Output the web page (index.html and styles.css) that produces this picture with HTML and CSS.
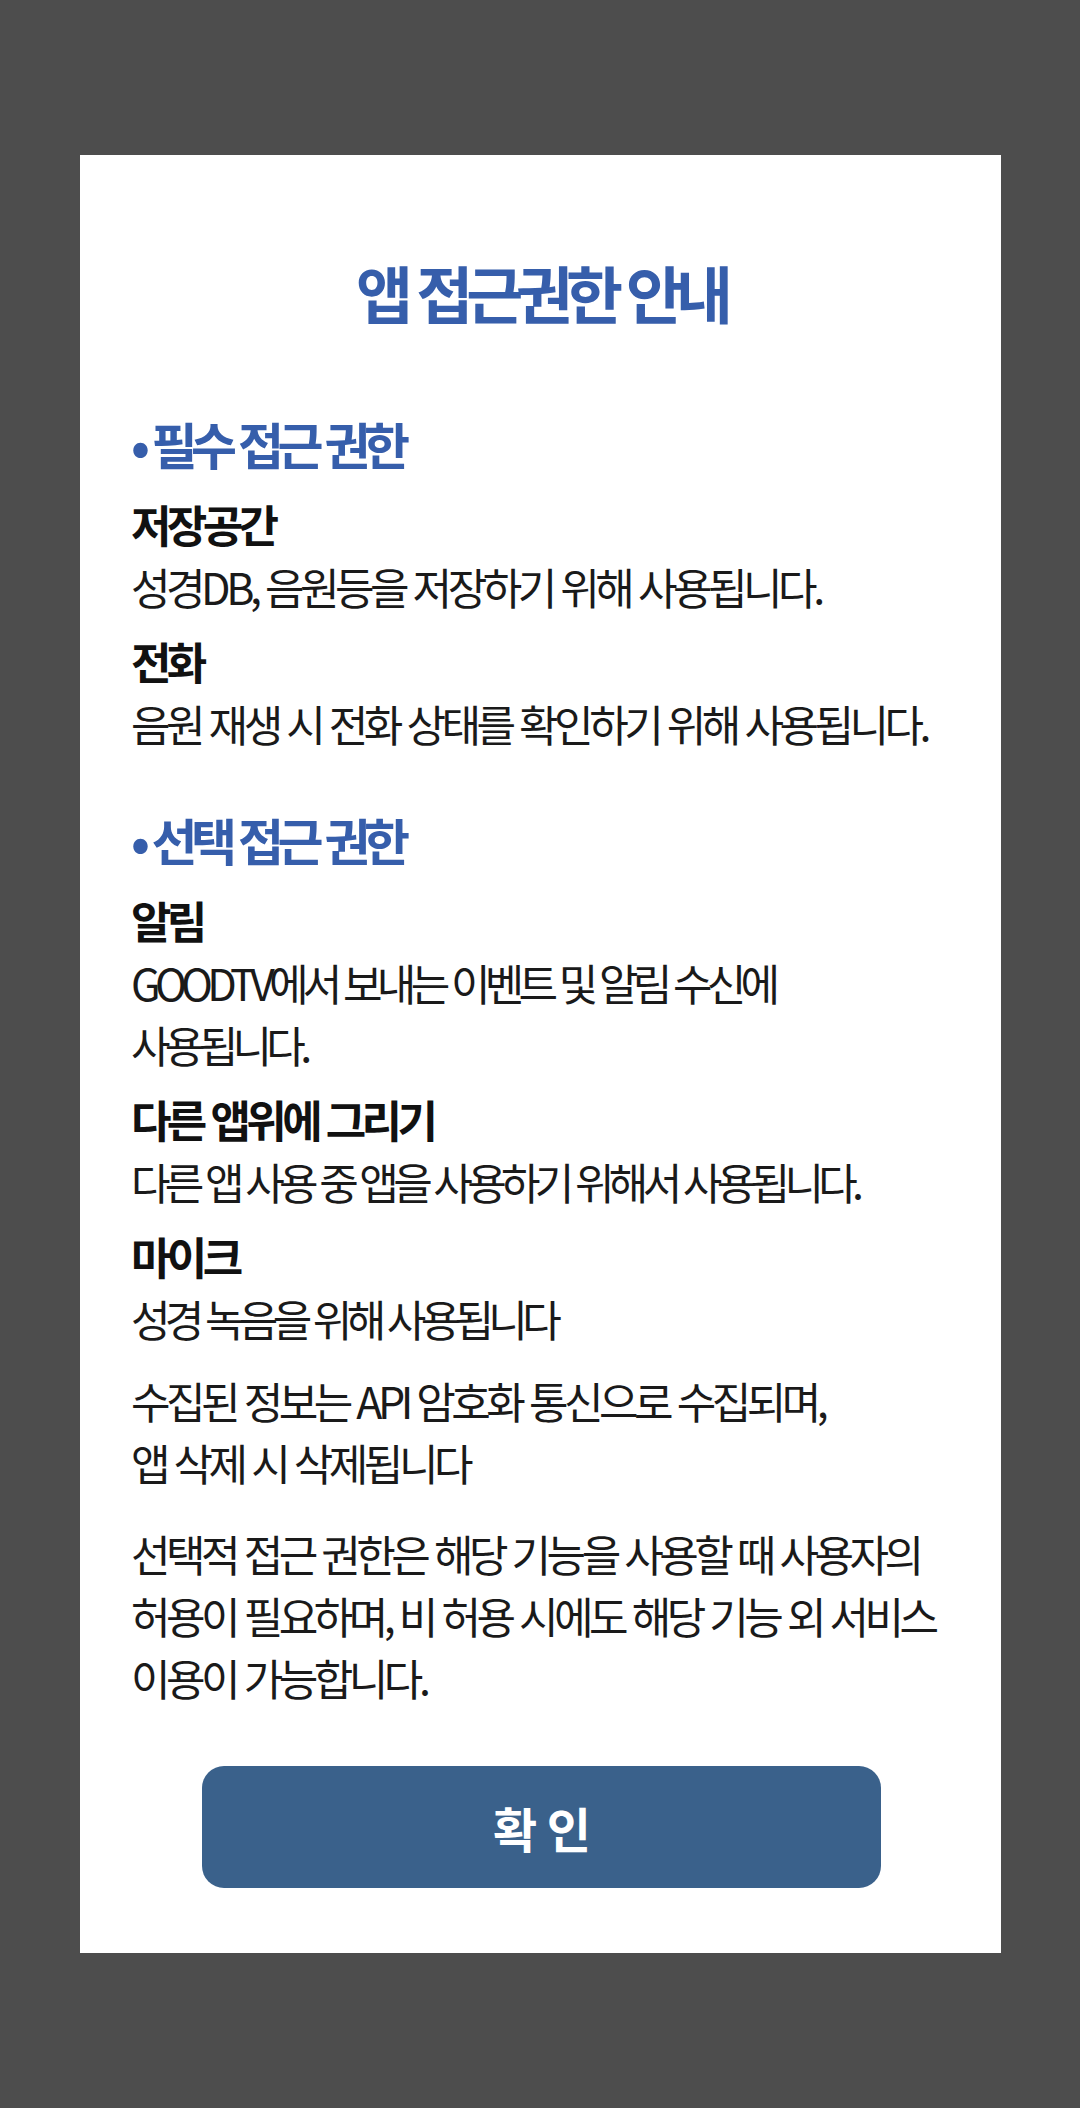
FILE: index.html
```html
<!DOCTYPE html>
<html lang="ko">
<head>
  <meta charset="utf-8">
  <title>앱 접근권한 안내</title>
  <link rel="stylesheet" href="styles.css">
</head>
<body>
  <div class="dialog">
    <h1 class="dialog-title">앱 접근권한 안내</h1>

    <section class="perm-group">
      <h2 class="group-title"><span class="dot">•</span>필수 접근 권한</h2>
      <div class="perm">
        <h3>저장공간</h3>
        <p>성경DB, 음원등을 저장하기 위해 사용됩니다.</p>
      </div>
      <div class="perm">
        <h3>전화</h3>
        <p>음원 재생 시 전화 상태를 확인하기 위해 사용됩니다.</p>
      </div>
    </section>

    <section class="perm-group optional">
      <h2 class="group-title"><span class="dot">•</span>선택 접근 권한</h2>
      <div class="perm">
        <h3>알림</h3>
        <p>GOODTV에서 보내는 이벤트 및 알림 수신에<br>사용됩니다.</p>
      </div>
      <div class="perm">
        <h3>다른 앱위에 그리기</h3>
        <p>다른 앱 사용 중 앱을 사용하기 위해서 사용됩니다.</p>
      </div>
      <div class="perm">
        <h3>마이크</h3>
        <p>성경 녹음을 위해 사용됩니다</p>
      </div>
    </section>

    <p class="note">수집된 정보는 API 암호화 통신으로 수집되며,<br>앱 삭제 시 삭제됩니다</p>
    <p class="note second">선택적 접근 권한은 해당 기능을 사용할 때 사용자의<br>허용이 필요하며, 비 허용 시에도 해당 기능 외 서비스<br>이용이 가능합니다.</p>

    <button class="confirm-btn">확 인</button>
  </div>
</body>
</html>
```

FILE: styles.css
```css
body {
  margin: 0;
  background-color: #4d4d4d;
  font-family: "Noto Sans CJK KR", "Noto Sans", sans-serif;
  color: #1a1a1a;
}
.dialog {
  box-sizing: border-box;
  width: 921px;
  height: 1798px;
  margin: 155px 0 0 80px;
  padding: 97px 50px 0 51px;
  background-color: white;
  display: flex;
  flex-direction: column;
}
.dialog-title {
  margin: 0;
  font-size: 62px;
  line-height: 80px;
  font-weight: 700;
  letter-spacing: -0.115em;
  text-align: center;
  color: #365eab;
}
.perm-group {
  margin-top: 76px;
}
.perm-group.optional {
  margin-top: 50px;
}
.group-title {
  margin: 0 0 15px;
  font-size: 50px;
  line-height: 70px;
  font-weight: 700;
  letter-spacing: -0.13em;
  color: #365eab;
}
.group-title .dot {
  margin-right: 8px;
}
.perm + .perm {
  margin-top: 13px;
}
.perm h3 {
  margin: 0;
  font-size: 44px;
  line-height: 62px;
  font-weight: 700;
  letter-spacing: -0.105em;
  color: #111;
}
.perm p,
.note {
  margin: 0;
  font-size: 43px;
  line-height: 62px;
  letter-spacing: -0.105em;
  white-space: nowrap;
}
/* optional descriptions are set a little tighter */
.optional .perm p {
  letter-spacing: -0.133em;
}
.note {
  margin-top: 20px;
}
.note.second {
  margin-top: 29px;
}
.confirm-btn {
  align-self: center;
  width: 679px;
  height: 122px;
  margin-top: 58px;
  border: none;
  border-radius: 22px;
  background-color: #3a618b;
  color: white;
  font-family: inherit;
  font-size: 48px;
  font-weight: 700;
  letter-spacing: -0.04em;
  cursor: pointer;
}
```
